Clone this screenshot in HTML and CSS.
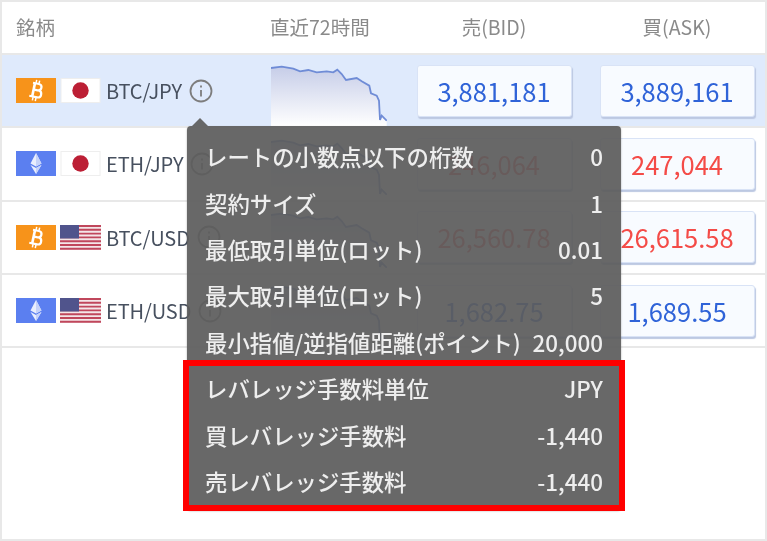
FILE: index.html
```html
<!DOCTYPE html>
<html lang="ja">
<head>
<meta charset="utf-8">
<title>銘柄</title>
<link rel="stylesheet" href="styles.css">
</head>
<body>
<svg class="defs" width="0" height="0" aria-hidden="true">
  <defs>
    <linearGradient id="area" x1="0" y1="0" x2="0" y2="1">
      <stop offset="0" stop-color="#c6cde8"/>
      <stop offset="1" stop-color="#ffffff"/>
    </linearGradient>
    <symbol id="spark" viewBox="0 0 116 61">
      <path fill="url(#area)" d="M0 3L10.7 1.7L22.3 3.7L29 6.3L37.3 5L45.7 7.3L55.7 6.3L62.3 7.3L66.3 4.7L70.7 9L75 15L85.7 13L90.7 16.3L98.3 20.7L100 28.3L105.7 30.7L108 35.7L109 55L110.7 50.7L115.7 55.7V61H0Z"/>
      <path fill="none" stroke="#6f8cd6" stroke-width="1.8" d="M0 3L10.7 1.7L22.3 3.7L29 6.3L37.3 5L45.7 7.3L55.7 6.3L62.3 7.3L66.3 4.7L70.7 9L75 15L85.7 13L90.7 16.3L98.3 20.7L100 28.3L105.7 30.7L108 35.7L109 55L110.7 50.7L115.7 55.7"/>
    </symbol>
    <symbol id="btc" viewBox="0 0 40 25">
      <rect width="40" height="25" fill="#f7931a"/>
      <g transform="rotate(12 20 12.5)" fill="none" stroke="#fff" stroke-width="2.200" stroke-linejoin="round">
        <path d="M15.500 5.500H21.500C25.800 5.500 25.800 12 21.500 12H17M17 12H22.500C27 12 27 19 22.500 19H14.500"/>
        <path d="M17.500 5V19.500" stroke-width="2.600"/>
        <path d="M18.500 2V5M21.500 2V5M18.500 19.500V23M21.500 19.500V23" stroke-width="1.500"/>
      </g>
    </symbol>
    <symbol id="eth" viewBox="0 0 40 25">
      <rect width="40" height="25" fill="#5b7ff0"/>
      <polygon points="20,2 14.500,12.500 20,15.500 25.500,12.500" fill="#e9eefd"/>
      <polygon points="20,2 20,15.500 25.500,12.500" fill="#c5d2f9"/>
      <polygon points="14.500,14 20,17 25.500,14 20,23" fill="#e9eefd"/>
      <polygon points="20,17 25.500,14 20,23" fill="#c5d2f9"/>
    </symbol>
    <symbol id="jp" viewBox="0 0 40 25">
      <rect x="0.500" y="0.500" width="39" height="24" fill="#fff" stroke="#eeeeee"/>
      <circle cx="20" cy="12.500" r="8.200" fill="#bc1f35"/>
    </symbol>
    <symbol id="us" viewBox="0 0 41 25">
      <rect width="41" height="25" fill="#f4e6e8"/>
      <path fill="none" stroke="#c0475c" stroke-width="1.900" d="M0 1H41M0 4.800H41M0 8.600H41M0 12.400H41M0 16.200H41M0 20H41M0 23.800H41"/>
      <rect width="19" height="13.500" fill="#50548c"/>
    </symbol>
  </defs>
</svg>
<main class="frame">
  <div class="head">
    <div class="col-name">銘柄</div>
    <div class="col-chart">直近72時間</div>
    <div class="col-price">売(BID)</div>
    <div class="col-price">買(ASK)</div>
  </div>

  <div class="row row-active">
    <div class="col-name pair">
      <svg class="coin"><use href="#btc"/></svg>
      <svg class="flag"><use href="#jp"/></svg>
      <span class="symbol">BTC/JPY</span>
      <svg class="info" viewBox="0 0 24 24"><circle cx="12" cy="12" r="10.500"/><path d="M12 11V17.500M12 6.500V8.500"/></svg>
    </div>
    <div class="col-chart chart"><svg class="spark"><use href="#spark"/></svg></div>
    <div class="col-price"><div class="quote blue">3,881,181</div></div>
    <div class="col-price"><div class="quote blue">3,889,161</div></div>
  </div>

  <div class="row">
    <div class="col-name pair">
      <svg class="coin"><use href="#eth"/></svg>
      <svg class="flag"><use href="#jp"/></svg>
      <span class="symbol">ETH/JPY</span>
      <svg class="info" viewBox="0 0 24 24"><circle cx="12" cy="12" r="10.500"/><path d="M12 11V17.500M12 6.500V8.500"/></svg>
    </div>
    <div class="col-chart chart"><svg class="spark"><use href="#spark"/></svg></div>
    <div class="col-price"><div class="quote red">246,064</div></div>
    <div class="col-price"><div class="quote red">247,044</div></div>
  </div>

  <div class="row">
    <div class="col-name pair">
      <svg class="coin"><use href="#btc"/></svg>
      <svg class="flag"><use href="#us"/></svg>
      <span class="symbol">BTC/USD</span>
      <svg class="info" viewBox="0 0 24 24"><circle cx="12" cy="12" r="10.500"/><path d="M12 11V17.500M12 6.500V8.500"/></svg>
    </div>
    <div class="col-chart chart"><svg class="spark"><use href="#spark"/></svg></div>
    <div class="col-price"><div class="quote red">26,560.78</div></div>
    <div class="col-price"><div class="quote red">26,615.58</div></div>
  </div>

  <div class="row">
    <div class="col-name pair">
      <svg class="coin"><use href="#eth"/></svg>
      <svg class="flag"><use href="#us"/></svg>
      <span class="symbol">ETH/USD</span>
      <svg class="info" viewBox="0 0 24 24"><circle cx="12" cy="12" r="10.500"/><path d="M12 11V17.500M12 6.500V8.500"/></svg>
    </div>
    <div class="col-chart chart"><svg class="spark"><use href="#spark"/></svg></div>
    <div class="col-price"><div class="quote blue">1,682.75</div></div>
    <div class="col-price"><div class="quote blue">1,689.55</div></div>
  </div>

  <aside class="tip">
    <div class="tip-row"><span>レートの小数点以下の桁数</span><span>0</span></div>
    <div class="tip-row"><span>契約サイズ</span><span>1</span></div>
    <div class="tip-row"><span>最低取引単位(ロット)</span><span>0.01</span></div>
    <div class="tip-row"><span>最大取引単位(ロット)</span><span>5</span></div>
    <div class="tip-row"><span>最小指値/逆指値距離(ポイント)</span><span>20,000</span></div>
    <div class="tip-row"><span>レバレッジ手数料単位</span><span>JPY</span></div>
    <div class="tip-row"><span>買レバレッジ手数料</span><span>-1,440</span></div>
    <div class="tip-row"><span>売レバレッジ手数料</span><span>-1,440</span></div>
  </aside>
  <div class="mark"></div>
</main>
</body>
</html>
```
FILE: styles.css
```css
* { box-sizing: border-box; }
html, body { margin: 0; padding: 0; background: #fff; }
.defs { position: absolute; }
.frame {
  position: relative;
  width: 767px;
  height: 541px;
  overflow: hidden;
  border: 2px solid #e8e8e8;
  background: #fff;
  font-family: "Noto Sans CJK JP", "Noto Sans", sans-serif;
  filter: blur(0.45px);
}
.head, .row {
  display: flex;
  align-items: center;
  padding: 0 10px 0 14px;
  border-bottom: 2px solid #e8e8e8;
}
.head {
  height: 53px;
  padding-bottom: 3px;
  font-size: 19.500px;
  color: #8a8a8a;
}
.row { height: 73.3px; }
.row-active { background: #dfeafc; }
.col-name { width: 254px; flex: none; }
.col-chart { width: 146.500px; flex: none; }
.chart { align-self: flex-end; padding-left: 1px; }
.col-price {
  width: 155px;
  flex: none;
  text-align: center;
}
.col-price + .col-price { margin-left: 28px; }
.pair { display: flex; align-items: center; }
.coin { width: 40px; height: 25px; flex: none; }
.flag { width: 41px; height: 25px; flex: none; margin-left: 4px; }
.symbol {
  margin-left: 5px;
  font-size: 20px;
  letter-spacing: -0.100px;
  color: #47505f;
  white-space: nowrap;
}
.info {
  width: 24px;
  height: 24px;
  flex: none;
  margin-left: 7px;
  fill: none;
  stroke: #7d7d7d;
  stroke-width: 1.800;
}
.spark { display: block; width: 116px; height: 61px; }
.quote {
  height: 52px;
  line-height: 50px;
  font-size: 25.500px;
  background: #f8fbff;
  border: 1px solid #d9e3f6;
  border-radius: 3px;
  box-shadow: 1px 2px 1px #bcc8e2;
}
.blue { color: #2f63d8; }
.red { color: #f44b47; }
.tip {
  position: absolute;
  left: 185px;
  top: 124px;
  width: 434px;
  padding: 7px 18px 6px;
  border-radius: 4px;
  background: rgba(92, 92, 92, 0.93);
  box-shadow: 0 1px 2px rgba(0, 0, 0, 0.35);
  color: #eee;
  font-size: 22.400px;
  font-weight: 500;
}
.tip::before {
  content: "";
  position: absolute;
  left: 5px;
  top: -8px;
  border-left: 8px solid transparent;
  border-right: 8px solid transparent;
  border-bottom: 8px solid rgba(92, 92, 92, 0.93);
}
.tip-row {
  display: flex;
  justify-content: space-between;
  align-items: center;
  height: 46.400px;
  white-space: nowrap;
}
.mark {
  position: absolute;
  left: 181px;
  top: 358px;
  width: 442px;
  height: 151px;
  border: 6px solid #f00;
}
```
